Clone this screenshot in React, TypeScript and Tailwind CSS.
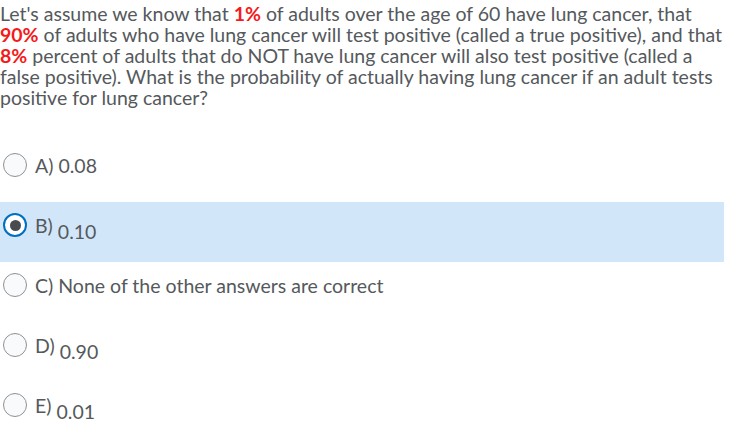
const options = [
  { letter: 'A)', value: '0.08', shifted: false, selected: false },
  { letter: 'B)', value: '0.10', shifted: true, selected: true },
  { letter: 'C)', value: 'None of the other answers are correct', shifted: false, selected: false },
  { letter: 'D)', value: '0.90', shifted: true, selected: false },
  { letter: 'E)', value: '0.01', shifted: true, selected: false },
];

function Radio({ selected }: { selected: boolean }) {
  if (selected) {
    return (
      <span className="mt-[11px] flex h-[24px] w-[24px] shrink-0 items-center justify-center rounded-full border-2 border-[#006fbf] bg-white">
        <span className="h-[11px] w-[11px] rounded-full bg-[#494c4e]" />
      </span>
    );
  }
  return (
    <span className="mt-[11px] h-[24px] w-[24px] shrink-0 rounded-full border border-[#8d9297] bg-[#f9fafc]" />
  );
}

export default function App() {
  return (
    <div
      className="h-[439px] w-[754px] overflow-hidden bg-white text-[#55595c]"
      style={{ fontFamily: 'Lato, "Open Sans", sans-serif' }}
    >
      <p className="w-[725px] pt-[3px] text-[19.5px] leading-[21px]">
        Let's assume we know that <span className="font-bold text-[#f41a1a]">1%</span> of adults
        over the age of 60 have lung cancer, that{' '}
        <span className="font-bold text-[#f41a1a]">90%</span> of adults who have lung cancer will
        test positive (called a true positive), and that{' '}
        <span className="font-bold text-[#f41a1a]">8%</span> percent of adults that do NOT have lung
        cancer will also test positive (called a false positive). What is the probability of
        actually having lung cancer if an adult tests positive for lung cancer?
      </p>

      <ul className="mt-[34px] w-[724px]">
        {options.map((option) => (
          <li
            key={option.letter}
            className={
              option.selected
                ? 'flex h-[60px] items-start gap-[8px] bg-[#d2e6fa] pl-[3px]'
                : 'flex h-[60px] items-start gap-[8px] pl-[3px]'
            }
          >
            <Radio selected={option.selected} />
            <span className="mt-[12px] text-[19.5px] leading-[24px]">
              {option.letter}{' '}
              <span className={option.shifted ? 'align-[-6px]' : ''}>{option.value}</span>
            </span>
          </li>
        ))}
      </ul>
    </div>
  );
}
